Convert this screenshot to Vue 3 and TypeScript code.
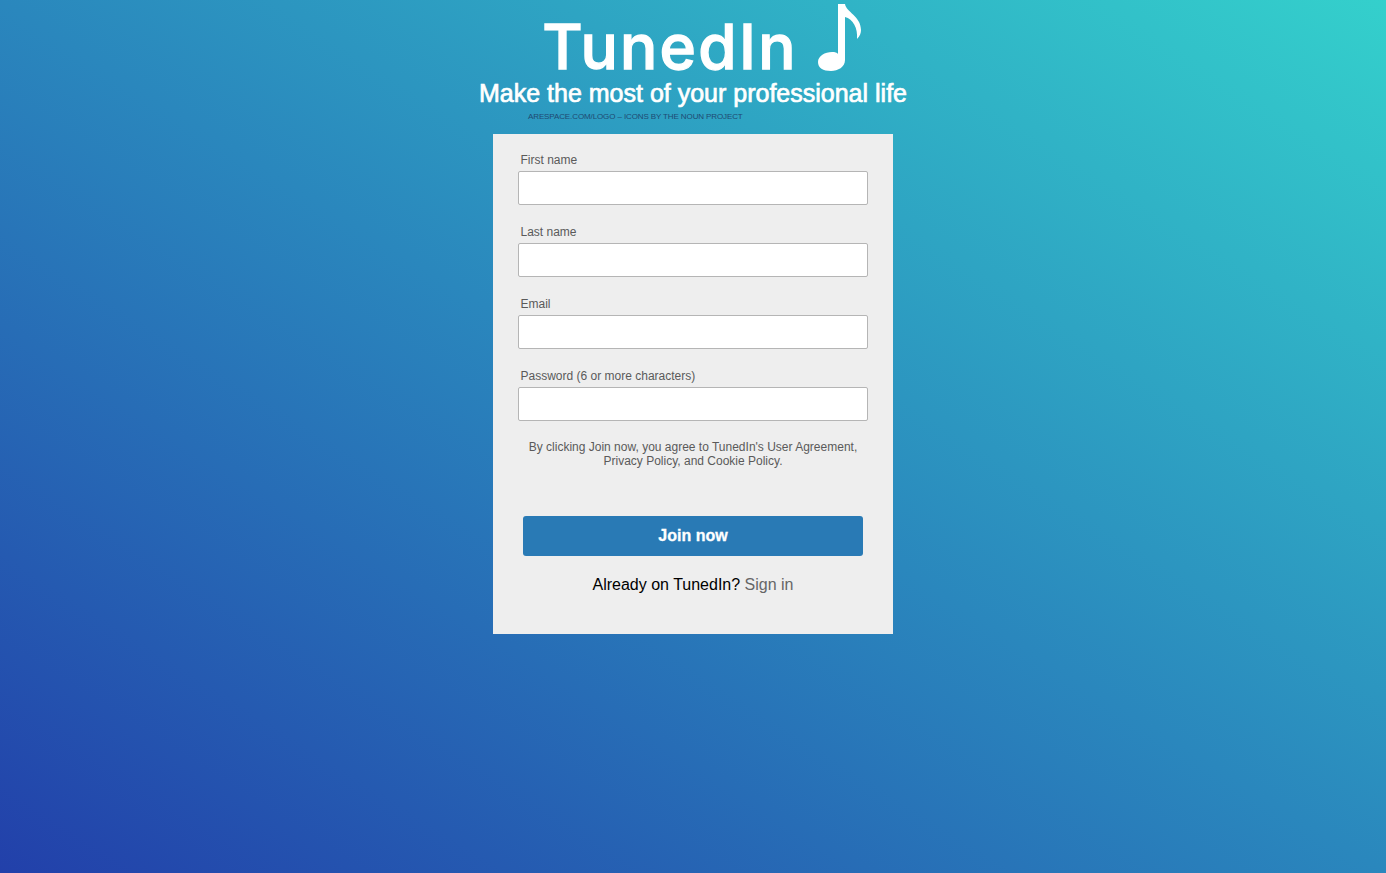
<template>
  <div class="page">
    <header class="header">
      <div class="logo">
        <span class="logo-text">TunedIn</span>
        <svg class="logo-note" viewBox="0 0 46 68" width="46" height="68" aria-hidden="true">
          <path d="M21 0H28C29 8 44 12 44 26C44 29 43 32 40 35C41 24 36 15 28 13V56C28 63 21 67 14 67C6 67 1 64 1 58C1 52 8 48 15 48C18 48 20 48.500 21 50Z" />
        </svg>
      </div>
      <h1 class="tagline">Make the most of your professional life</h1>
      <p class="credit">ARESPACE.COM/LOGO – ICONS BY THE NOUN PROJECT</p>
    </header>

    <form class="card" @submit.prevent>
      <div v-for="field in fields" :key="field.label" class="field">
        <label class="field-label" :for="field.id">{{ field.label }}</label>
        <input :id="field.id" class="field-input" :type="field.type">
      </div>

      <p class="terms">
        By clicking Join now, you agree to TunedIn's User Agreement,<br>
        Privacy Policy, and Cookie Policy.
      </p>

      <button class="join" type="submit">Join now</button>

      <p class="signin">Already on TunedIn? <a class="signin-link" href="#">Sign in</a></p>
    </form>
  </div>
</template>

<script setup lang="ts">
interface Field {
  id: string;
  label: string;
  type: string;
}

const fields: Field[] = [
  { id: 'first-name', label: 'First name', type: 'text' },
  { id: 'last-name', label: 'Last name', type: 'text' },
  { id: 'email', label: 'Email', type: 'email' },
  { id: 'password', label: 'Password (6 or more characters)', type: 'password' },
];
</script>

<style>
html,
body {
  margin: 0;
  padding: 0;
}
</style>

<style scoped>
.page {
  height: 873px;
  overflow: hidden;
  font-family: "Liberation Sans", Arial, sans-serif;
  background: linear-gradient(to top right, #2240aa 0%, #2a87bd 50%, #34d0cc 100%);
}

.header {
  display: flex;
  flex-direction: column;
  align-items: center;
  height: 134px;
  color: #fff;
}

.logo {
  display: flex;
  align-items: flex-start;
  gap: 19px;
  height: 76px;
  padding-left: 19px;
}

.logo-text {
  margin-top: 17px;
  font-family: Inter, "Liberation Sans", sans-serif;
  font-size: 62px;
  font-weight: 500;
  line-height: 59px;
  letter-spacing: 2.3px;
  -webkit-text-stroke: 1.3px #fff;
}

.logo-note {
  margin-top: 4px;
  fill: #fff;
}

.tagline {
  margin: 0;
  font-size: 25px;
  font-weight: 400;
  line-height: 34px;
  -webkit-text-stroke: 0.7px #fff;
}

.credit {
  align-self: flex-start;
  margin: 1px 0 0 528px;
  font-size: 8px;
  line-height: 11px;
  letter-spacing: -0.11px;
  color: #1f4a72;
}

.card {
  display: flex;
  flex-direction: column;
  box-sizing: border-box;
  width: 400px;
  height: 500px;
  margin: 0 auto;
  padding: 19px 25px 0;
  background: #eee;
}

.field {
  display: flex;
  flex-direction: column;
  height: 72px;
}

.field-label {
  height: 18px;
  padding-left: 2.5px;
  font-size: 12px;
  line-height: 14px;
  color: #5a5a5a;
}

.field-input {
  box-sizing: border-box;
  width: 350px;
  height: 34px;
  padding: 0 8px;
  background: #fff;
  border: 1px solid #b5b5b5;
  border-radius: 2px;
}

.terms {
  margin: -1px 0 0;
  font-size: 12px;
  line-height: 14px;
  text-align: center;
  color: #5a5a5a;
}

.join {
  flex: none;
  width: 340px;
  height: 40px;
  margin: 48px auto 0;
  padding: 0;
  font-family: inherit;
  font-size: 16px;
  font-weight: 700;
  color: #fff;
  background: #297ab5;
  border: 0;
  border-radius: 3px;
  -webkit-text-stroke: 0.3px #fff;
}

.signin {
  margin: 19px 0 0;
  font-size: 16px;
  line-height: 20px;
  text-align: center;
  color: #000;
}

.signin-link {
  color: #666;
  text-decoration: none;
}
</style>
